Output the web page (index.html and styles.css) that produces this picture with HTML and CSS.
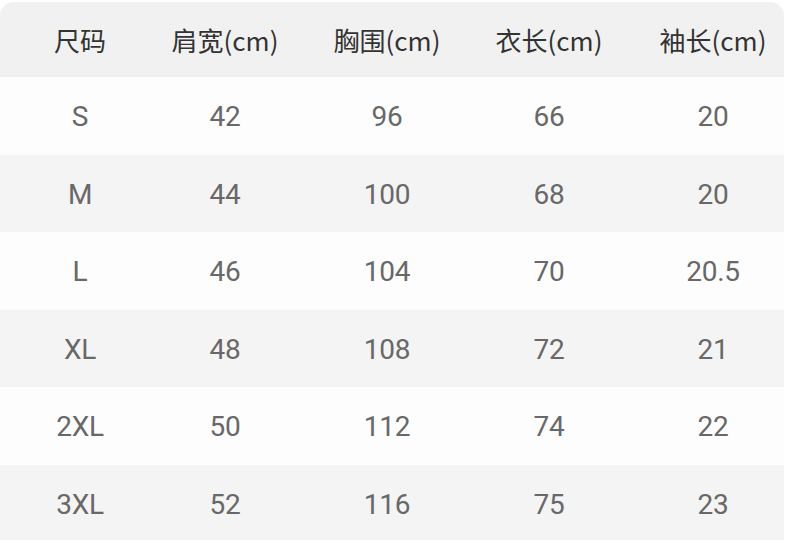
FILE: index.html
```html
<!DOCTYPE html>
<html lang="zh">
<head>
<meta charset="utf-8">
<link rel="stylesheet" href="styles.css">
</head>
<body>
<div class="card">
  <div class="row head">
    <div class="cell c1">尺码</div>
    <div class="cell">肩宽(cm)</div>
    <div class="cell">胸围(cm)</div>
    <div class="cell">衣长(cm)</div>
    <div class="cell c5">袖长(cm)</div>
  </div>
  <div class="row light">
    <div class="cell c1">S</div><div class="cell">42</div><div class="cell">96</div><div class="cell">66</div><div class="cell c5">20</div>
  </div>
  <div class="row gray">
    <div class="cell c1">M</div><div class="cell">44</div><div class="cell">100</div><div class="cell">68</div><div class="cell c5">20</div>
  </div>
  <div class="row light">
    <div class="cell c1">L</div><div class="cell">46</div><div class="cell">104</div><div class="cell">70</div><div class="cell c5">20.5</div>
  </div>
  <div class="row gray">
    <div class="cell c1">XL</div><div class="cell">48</div><div class="cell">108</div><div class="cell">72</div><div class="cell c5">21</div>
  </div>
  <div class="row light">
    <div class="cell c1">2XL</div><div class="cell">50</div><div class="cell">112</div><div class="cell">74</div><div class="cell c5">22</div>
  </div>
  <div class="row gray">
    <div class="cell c1">3XL</div><div class="cell">52</div><div class="cell">116</div><div class="cell">75</div><div class="cell c5">23</div>
  </div>
</div>
</body>
</html>
```
FILE: styles.css
```css
html, body {
  margin: 0;
  padding: 0;
  background: #ffffff;
  overflow: hidden;
}
body {
  padding-top: 2px;
  font-family: Roboto, "Noto Sans CJK SC", sans-serif;
}
.card {
  width: 784px;
  border-radius: 14px 14px 0 0;
  overflow: hidden;
  background: #fdfdfd;
}
.row {
  display: grid;
  grid-template-columns: 144px 162px 162px 162px 154px;
  height: 77.5px;
  align-items: center;
}
.head {
  height: 75px;
  background: #f1f1f1;
  font-family: "Noto Sans CJK SC", sans-serif;
  font-size: 26px;
  color: #333333;
}
.light { background: #fdfdfd; }
.gray { background: #f4f4f4; }
.cell {
  text-align: center;
  white-space: nowrap;
}
.light .cell, .gray .cell {
  font-size: 28px;
  color: #686868;
  letter-spacing: -0.3px;
  padding-top: 2px;
}
.c1 { padding-left: 16px; }
.c5 { padding-left: 12px; }
```
